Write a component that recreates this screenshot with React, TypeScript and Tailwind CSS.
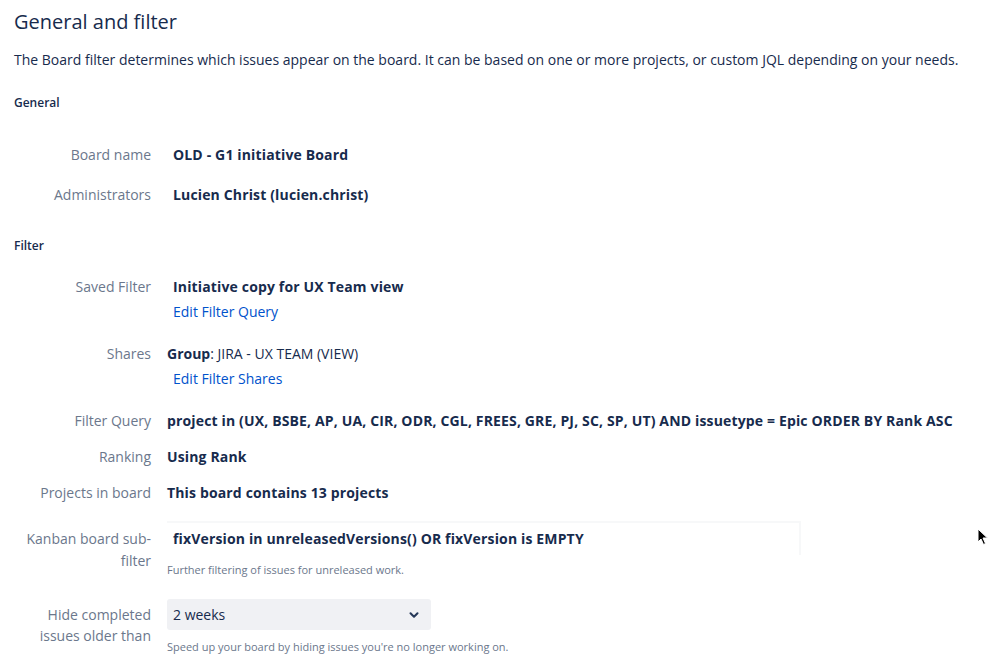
import { ChevronDown } from 'lucide-react';
import type { ReactNode } from 'react';

function Row({ label, children, className = '' }: { label: ReactNode; children: ReactNode; className?: string }) {
  return (
    <div className={`flex ${className}`}>
      <div className="w-[137px] shrink-0 text-right text-[14px] leading-5 text-[#6b778c]">{label}</div>
      <div className="ml-4 min-w-0 flex-1">{children}</div>
    </div>
  );
}

export default function App() {
  return (
    <div className="relative min-h-[670px] bg-white px-[14px] pt-[8px] font-['Open_Sans',sans-serif] text-[#172b4d]">
      <h1 className="text-[20px] font-medium leading-7">General and filter</h1>
      <p className="mt-[14px] text-[14px] leading-5">
        The Board filter determines which issues appear on the board. It can be based on one or more projects, or custom JQL depending on your needs.
      </p>

      <h2 className="mt-[25px] text-[12px] font-semibold leading-4">General</h2>

      <Row label="Board name" className="mt-[34px]">
        <div className="pl-[6px] text-[14px] font-bold leading-5 tracking-[0.15px]">OLD - G1 initiative Board</div>
      </Row>
      <Row label="Administrators" className="mt-[20px]">
        <div className="pl-[6px] text-[14px] font-bold leading-5 tracking-[0.15px]">Lucien Christ (lucien.christ)</div>
      </Row>

      <h2 className="mt-[33px] text-[12px] font-semibold leading-4">Filter</h2>

      <Row label="Saved Filter" className="mt-[23px]">
        <div className="pl-[6px] text-[14px] font-bold leading-5 tracking-[0.15px]">Initiative copy for UX Team view</div>
        <a className="mt-[5px] block pl-[6px] text-[14px] leading-5 text-[#0052cc]">Edit Filter Query</a>
      </Row>
      <Row label="Shares" className="mt-[22px]">
        <div className="text-[14px] leading-5">
          <span className="font-bold">Group</span>: JIRA - UX TEAM (VIEW)
        </div>
        <a className="mt-[5px] block pl-[6px] text-[14px] leading-5 text-[#0052cc]">Edit Filter Shares</a>
      </Row>
      <Row label="Filter Query" className="mt-[22px]">
        <div className="whitespace-nowrap text-[14px] font-bold leading-5 tracking-[0.15px]">
          project in (UX, BSBE, AP, UA, CIR, ODR, CGL, FREES, GRE, PJ, SC, SP, UT) AND issuetype = Epic ORDER BY Rank ASC
        </div>
      </Row>
      <Row label="Ranking" className="mt-[16px]">
        <div className="text-[14px] font-bold leading-5 tracking-[0.15px]">Using Rank</div>
      </Row>
      <Row label="Projects in board" className="mt-[16px]">
        <div className="text-[14px] font-bold leading-5 tracking-[0.15px]">This board contains 13 projects</div>
      </Row>

      <div className="mt-[18px] flex">
        <div className="mt-[7px] w-[137px] shrink-0 text-right text-[14px] leading-[22px] text-[#6b778c]">
          Kanban board sub-
          <br />
          filter
        </div>
        <div className="ml-4 min-w-0 flex-1">
          <div className="w-[634px] border-r-2 border-t-2 border-[#f7f8f9] py-[6px] pl-[6px] text-[14px] font-bold leading-5 tracking-[0.15px]">
            fixVersion in unreleasedVersions() OR fixVersion is EMPTY
          </div>
          <p className="mt-[7px] text-[11px] leading-4 text-[#6b778c]">Further filtering of issues for unreleased work.</p>
        </div>
      </div>

      <div className="mt-[21px] flex">
        <div className="mt-[5px] w-[137px] shrink-0 text-right text-[14px] leading-[21px] text-[#6b778c]">
          Hide completed issues older than
        </div>
        <div className="ml-4 min-w-0 flex-1">
          <div className="flex h-[31px] w-[264px] items-center justify-between rounded-[3px] bg-[#f0f1f4] pl-[6px] pr-[10px] text-[14px] leading-5">
            <span>2 weeks</span>
            <ChevronDown className="h-[14px] w-[14px] text-[#253858]" strokeWidth={3.5} />
          </div>
          <p className="mt-[9px] text-[11px] leading-4 text-[#6b778c]">Speed up your board by hiding issues you&apos;re no longer working on.</p>
        </div>
      </div>

      <svg className="absolute left-[977px] top-[528px]" width="12" height="18" viewBox="0 0 12 18">
        <path d="M1 1 L1 14 L4 11 L6.5 16.5 L8.5 15.5 L6 10 L10.5 10 Z" fill="#000" stroke="#fff" strokeWidth="1" />
      </svg>
    </div>
  );
}
